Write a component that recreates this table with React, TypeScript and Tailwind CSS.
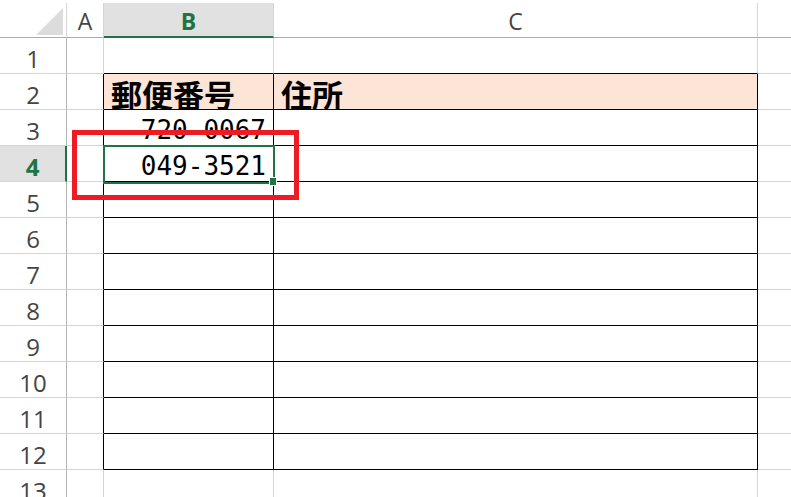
import React from 'react';

const ROWS = [1, 2, 3, 4, 5, 6, 7, 8, 9, 10, 11, 12, 13];

const cellText: Record<string, React.ReactNode> = {
  '2B': '郵便番号',
  '2C': '住所',
  '3B': '720-0067',
  '4B': '049-3521',
};

function RowHeader({ r }: { r: number }) {
  const selected = r === 4;
  return (
    <div
      className={
        selected
          ? 'w-[67px] shrink-0 h-full flex items-center justify-center bg-[#e1e1e1] border-b border-b-[#d4d4d4] border-r-2 border-r-[#217346] text-[#217346] font-bold'
          : 'w-[67px] shrink-0 h-full flex items-center justify-center bg-white border-b border-b-[#d4d4d4] border-r border-r-[#b4b4b4] text-[#444]'
      }
    >
      <span className="text-[24px] leading-none pt-[7px]">{r}</span>
    </div>
  );
}

function Cell({ r, col }: { r: number; col: 'A' | 'B' | 'C' | 'D' }) {
  const inTable = r >= 2 && r <= 12;
  const blackRight = inTable && (col === 'A' || col === 'B' || col === 'C');
  const blackBottom = r >= 1 && r <= 12 && (col === 'B' || col === 'C');
  const fill = r === 2 && (col === 'B' || col === 'C');
  const text = cellText[`${r}${col}`];
  const isHead = r === 2;

  const width =
    col === 'A' ? 'w-[37px]' : col === 'B' ? 'w-[170px]' : col === 'C' ? 'w-[484px]' : 'w-[100px]';

  return (
    <div
      className={[
        width,
        'shrink-0 h-full flex items-center border-r border-b overflow-visible whitespace-nowrap',
        blackRight ? 'border-r-black' : 'border-r-[#d4d4d4]',
        blackBottom ? 'border-b-black' : 'border-b-[#d4d4d4]',
        fill ? 'bg-[#fce4d6]' : 'bg-white',
        isHead ? 'justify-start pl-[7px]' : 'justify-end pr-[7px]',
      ].join(' ')}
    >
      {text && isHead && (
        <span className="text-[31px] font-bold leading-none text-black pt-[4px]" style={{ fontFamily: '"Noto Sans CJK JP", sans-serif' }}>
          {text}
        </span>
      )}
      {text && !isHead && (
        <span className="text-[26px] leading-none text-black pt-[5px]" style={{ fontFamily: '"DejaVu Sans Mono", monospace' }}>
          {text}
        </span>
      )}
    </div>
  );
}

export default function App() {
  return (
    <div className="relative w-[791px] h-[497px] overflow-hidden bg-white" style={{ fontFamily: '"Open Sans", "Liberation Sans", sans-serif' }}>
      {/* column headers */}
      <div className="h-[3px] bg-white" />
      <div className="flex h-[35px]">
        <div className="w-[67px] shrink-0 h-full border-r border-r-[#d4d4d4] border-b border-b-[#ababab] relative">
          <svg className="absolute left-[36px] top-[5px]" width="28" height="28" viewBox="0 0 28 28">
            <polygon points="27,0 27,27 0,27" fill="#dcdcdc" />
          </svg>
        </div>
        <div className="w-[37px] shrink-0 h-full flex items-center justify-center border-r border-r-[#d4d4d4] border-b border-b-[#ababab] text-[#444]">
          <span className="text-[23px] leading-none pt-[2px]">A</span>
        </div>
        <div className="w-[170px] shrink-0 h-full flex items-center justify-center bg-[#e1e1e1] border-r border-r-[#d4d4d4] border-b-2 border-b-[#217346] text-[#217346] font-bold">
          <span className="text-[23px] leading-none pt-[3px]">B</span>
        </div>
        <div className="w-[484px] shrink-0 h-full flex items-center justify-center border-r border-r-[#d4d4d4] border-b border-b-[#ababab] text-[#444]">
          <span className="text-[23px] leading-none pt-[2px]">C</span>
        </div>
        <div className="flex-1 h-full border-b border-b-[#ababab]" />
      </div>

      {/* rows */}
      {ROWS.map((r) => (
        <div key={r} className="flex h-[36px]">
          <RowHeader r={r} />
          <Cell r={r} col="A" />
          <Cell r={r} col="B" />
          <Cell r={r} col="C" />
          <Cell r={r} col="D" />
        </div>
      ))}

      {/* active cell B4 */}
      <div className="absolute left-[103px] top-[145px] w-[172px] h-[39px] border-2 border-[#217346]" />
      <div className="absolute left-[270px] top-[178px] w-[6px] h-[7px] bg-[#217346] outline outline-1 outline-white" />

      {/* red annotation box */}
      <div className="absolute left-[72px] top-[130px] w-[227px] h-[70px] border-[5px] border-[#ed1c24]" />
    </div>
  );
}
